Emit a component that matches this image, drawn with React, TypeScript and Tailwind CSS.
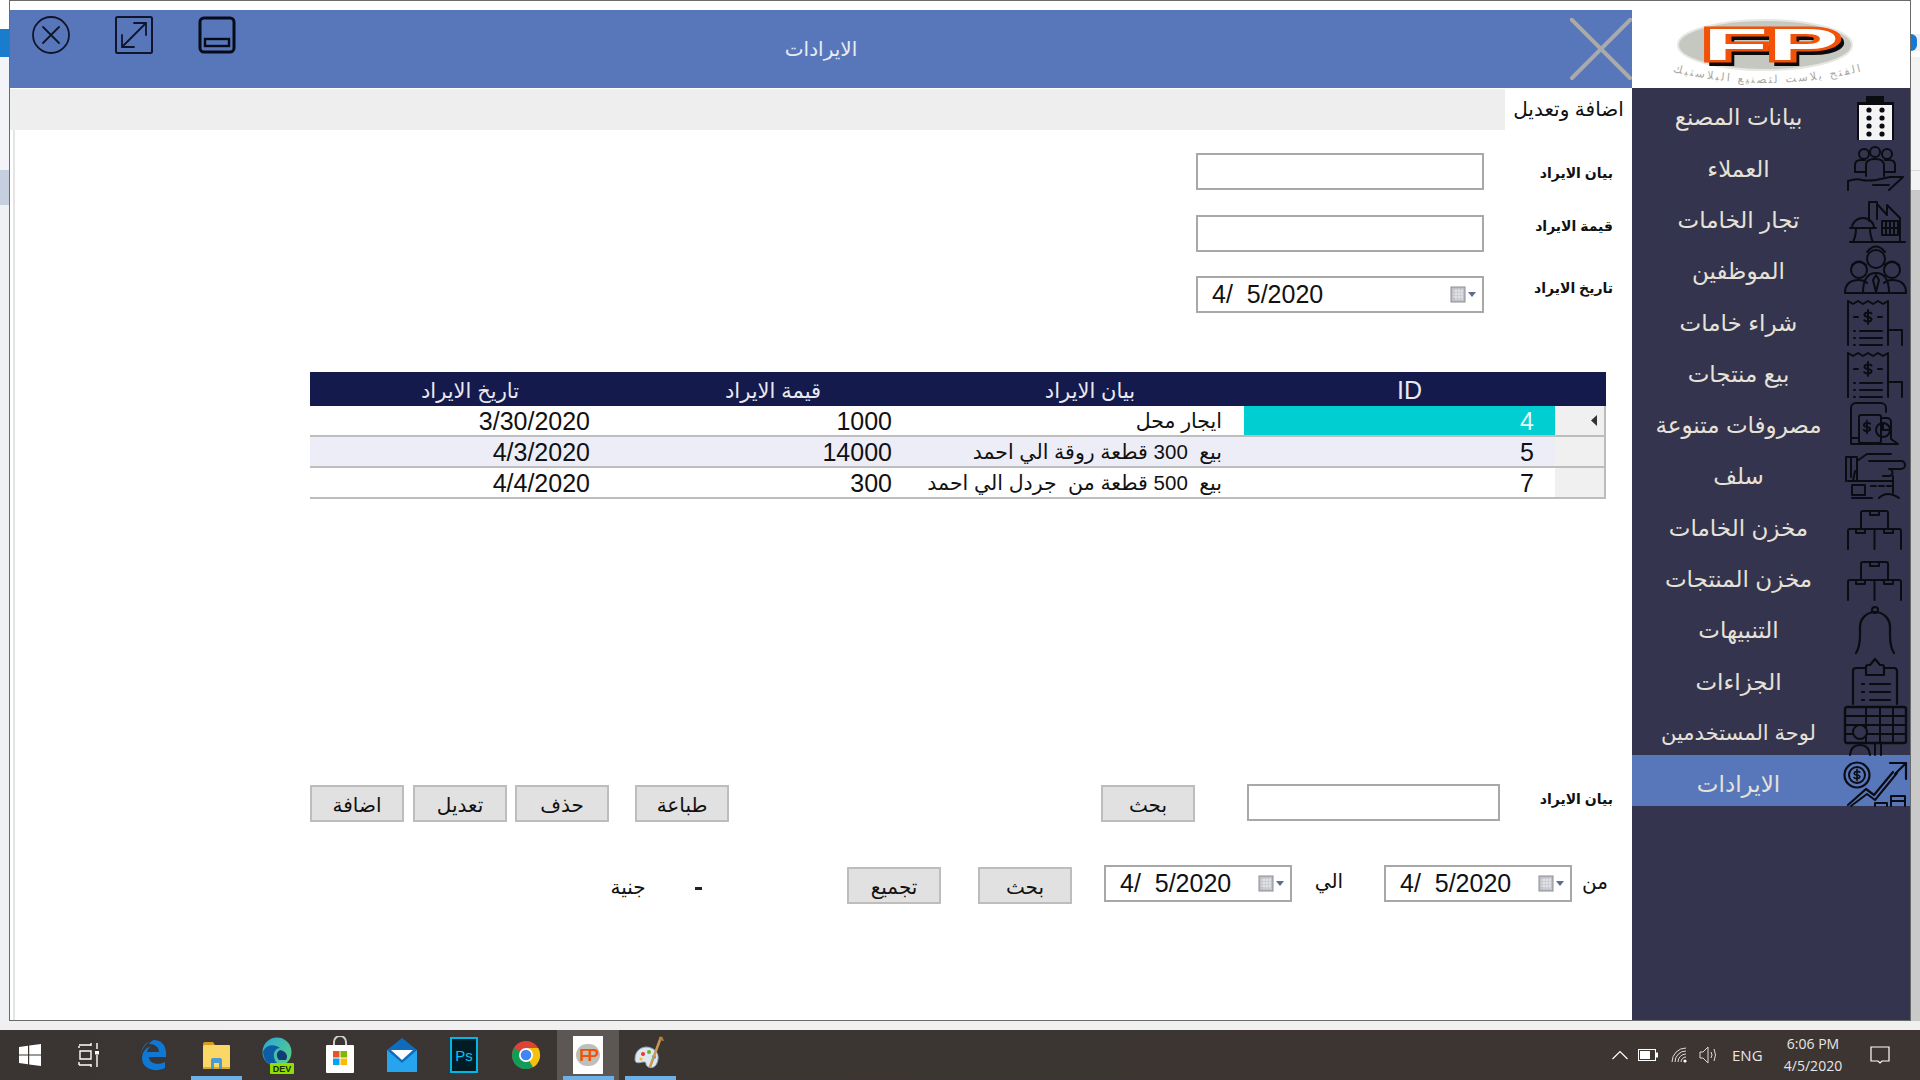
import React from "react";

const AR = "font-['Liberation_Sans','DejaVu_Sans',sans-serif]";

const P = ({ children }: { children: React.ReactNode }) => (
  <svg width="60" height="51" viewBox="0 0 60 51" fill="none" stroke="#0b0b12" strokeWidth="2" strokeLinecap="round" strokeLinejoin="round" className="overflow-visible">
    {children}
  </svg>
);

const Dollar = ({ x, y, s = 1 }: { x: number; y: number; s?: number }) => (
  <g transform={`translate(${x} ${y}) scale(${s})`}>
    <path d="M3.5 -3.5 C2.5 -5 -3.5 -5 -3.5 -2 C-3.5 1 3.5 -1 3.5 2.2 C3.5 5 -2.5 5 -3.8 3.2 M0 -7 V7" />
  </g>
);

const Receipt = () => (
  <P>
    <path d="M3 52 V8 l5 3 5-3 5 3 5-3 5 3 5-3 5 3 5-3 V52" />
    <path d="M43 37 H57 V52" />
    <Dollar x={23} y={24} />
    <path d="M9 24 h4 M33 24 h4 M9 38 h1 M15 38 h22 M9 45 h1 M15 45 h22 M9 52 h1 M15 52 h22" />
  </P>
);

const Boxes = () => (
  <P>
    <path d="M16 30 V14 a2 2 0 0 1 2-2 H41 a2 2 0 0 1 2 2 V30" />
    <path d="M25 12 v4 h9 v-4" />
    <path d="M3 50 V32 a2 2 0 0 1 2-2 H54 a2 2 0 0 1 2 2 V50 M29.5 30 V50" />
    <path d="M11 30 v4 h9 v-4 M39 30 v4 h9 v-4" />
  </P>
);

const icons: React.ReactNode[] = [
  <svg key="0" width="60" height="51" viewBox="0 0 60 51" className="overflow-visible">
    <path d="M21 8 H39 V14 H49 V52 H12 V14 H21 Z" fill="#0b0b12" />
    <rect x="14" y="17" width="33" height="35" fill="#f4f4f4" />
    {[22, 30, 38, 46].map((y) => (
      <g key={y} fill="#0b0b12">
        <circle cx="24" cy={y} r="2.6" />
        <circle cx="37" cy={y} r="2.6" />
      </g>
    ))}
  </svg>,
  <P key="1">
    <circle cx="19" cy="15" r="5" />
    <circle cx="30" cy="13" r="5" />
    <circle cx="42" cy="15" r="5" />
    <path d="M10 33 v-7 q0-5 6-5 h4 M50 33 v-7 q0-5-6-5 h-4" />
    <path d="M21 37 v-11 q0-6 9-6 q9 0 9 6 v11 M10 33 h11 M39 33 h11" />
    <path d="M3 51 v-9 q8-3 14-1 q4 1 14 0 l14-3 l13 0 l-14 13 M28 46 h16" />
  </P>,
  <P key="2">
    <path d="M24 30 V11 h8 V28 M33 14 l9 10 v-10 l13 13 V50" />
    <path d="M5 51 H60" />
    <rect x="37" y="30" width="16" height="14" />
    <path d="M37 37 h16 M45 30 v14 M41 30 v14 M49 30 v14" />
    <path d="M7 37 a11 10 0 0 1 22 0 Z M5 37 h26 M11 37 q0 8 -3 14 M25 37 q0 8 3 14" />
  </P>,
  <P key="3">
    <circle cx="31" cy="17" r="9" />
    <circle cx="14" cy="28" r="8" />
    <circle cx="47" cy="28" r="8" />
    <path d="M22 10 q9 -11 18 0 M7 23 q7 -7 14 0 M40 23 q7 -7 14 0" />
    <path d="M0 51 q0 -13 14 -13 q5 0 8 3 M61 51 q0 -13 -14 -13 q-5 0 -8 3 M18 51 q0 -20 13 -20 q13 0 13 20" />
    <path d="M0 51 H61 M31 33 l-3 5 3 12 3 -12 z" />
  </P>,
  <Receipt key="4" />,
  <Receipt key="5" />,
  <P key="6">
    <path d="M6 47 V12 a5 5 0 0 1 5-5 H36 a5 5 0 0 1 5 5 V16 M6 42 H14" />
    <rect x="14" y="19" width="22" height="28" rx="2" />
    <path d="M36 22 h6 a4 4 0 0 1 4 4 V43 M46 43 l7 5 H6" />
    <Dollar x={22} y={31} s={0.9} />
    <circle cx="38" cy="34" r="7" />
    <path d="M38 27 V34 H45" />
  </P>,
  <P key="7">
    <path d="M1 34 V10 H12 V34 M6 10 V30" />
    <path d="M12 14 L22 7 H46 M24 14 H56 a3 3 0 0 1 0 8 H44 a3 3 0 0 1 0 7 H38" />
    <path d="M3 34 H48 M8 34 L10 24 M48 29 V46" />
    <rect x="7" y="38" width="13" height="10" />
    <path d="M26 39 h5 M34 39 h5 M42 39 h4 M7 51 h20 M34 51 q8-8 20 0" />
  </P>,
  <Boxes key="8" />,
  <Boxes key="9" />,
  <P key="10">
    <circle cx="30" cy="9" r="3" />
    <path d="M11 52 q4 -6 4 -18 V26 a15 15 0 0 1 30 0 V34 q0 12 4 18" strokeWidth="2.2" />
  </P>,
  <P key="11">
    <path d="M8 52 V19 q0-3 3-3 H21 M52 52 V19 q0-3-3-3 H39" strokeWidth="2.2" />
    <path d="M21 23 V15 q0-2 2-2 H25 l5-6 5 6 H37 q2 0 2 2 V23 Z" strokeWidth="2.2" />
    <path d="M17 32 h2 M25 32 h20 M17 40 h2 M25 40 h20 M17 48 h2 M25 48 h20" strokeWidth="2.2" />
  </P>,
  <P key="12">
    <rect x="0" y="3" width="61" height="36" rx="2" strokeWidth="2.4" />
    <path d="M0 12 H61 M0 21 H61 M0 30 H61 M21 3 V39 M35 3 V39 M48 3 V39" strokeWidth="2" />
    <circle cx="15" cy="28" r="7" fill="#34344e" />
    <path d="M5 51 q1-10 10-10 q9 0 10 10 M30 39 V51 M36 39 V51" />
  </P>,
  <P key="13">
    <circle cx="12" cy="20" r="12.5" strokeWidth="2.2" />
    <circle cx="12" cy="20" r="8" />
    <Dollar x={12} y={20} s={0.8} />
    <path d="M3 50 L21 34 L29 40 L48 17" strokeWidth="2.2" />
    <path d="M6 51 L22 39 L30 45 L52 18" strokeWidth="2" />
    <path d="M45 8 H61 V24 M61 8 L50 19" strokeWidth="2.2" />
    <path d="M30 51 V48 H42 V51 M46 51 V41 H60 V51 M46 46 H60" />
  </P>,
];

const menu = [
  "بيانات المصنع",
  "العملاء",
  "تجار الخامات",
  "الموظفين",
  "شراء خامات",
  "بيع منتجات",
  "مصروفات متنوعة",
  "سلف",
  "مخزن الخامات",
  "مخزن المنتجات",
  "التنبيهات",
  "الجزاءات",
  "لوحة المستخدمين",
  "الايرادات",
];

const Logo = () => (
  <svg width="278" height="78" viewBox="0 0 278 78">
    <ellipse cx="133" cy="36" rx="87" ry="25" fill="#c4c8c0" stroke="#e6e6e2" strokeWidth="2" />
    <text x="143" y="55" textAnchor="middle" fontFamily="Liberation Sans" fontWeight="700" fontSize="44" textLength="136" lengthAdjust="spacingAndGlyphs" fill="#0a0a0a" stroke="#0a0a0a" strokeWidth="4">FP</text>
    <text x="139" y="51" textAnchor="middle" fontFamily="Liberation Sans" fontWeight="700" fontSize="44" textLength="136" lengthAdjust="spacingAndGlyphs" fill="#ffffff" stroke="#f25208" strokeWidth="5" paintOrder="stroke">FP</text>
    <path id="arcl" d="M30 60 Q132 88 240 60" fill="none" />
    <text fontFamily="DejaVu Sans" fontSize="11" fill="#a8a8a0" textAnchor="middle" textLength="190">
      <textPath href="#arcl" startOffset="50%">الفتح بلاست لتصنيع البلاستيك</textPath>
    </text>
  </svg>
);

const Calendar = () => (
  <span className="flex items-center gap-[1px]">
    <svg width="17" height="17" viewBox="0 0 17 17">
      <rect x="1" y="1" width="14" height="15" fill="#c0c2c8" stroke="#8a8d94" />
      <path d="M3 5 H13 M3 8 H13 M3 11 H13 M6 3 V14 M9 3 V14 M12 3 V14" stroke="#e6e8ec" strokeWidth="1" />
    </svg>
    <svg width="8" height="5" viewBox="0 0 8 5"><path d="M0 0 H8 L4 5 Z" fill="#5c6c8c" /></svg>
  </span>
);

const DateBox = ({ width, pl, pr }: { width: string; pl: string; pr: string }) => (
  <div className={`${width} ${pl} ${pr} h-[37px] border-2 border-[#a8a8a8] bg-white flex items-center justify-between`}>
    <span className="font-['Liberation_Sans'] text-[25px] whitespace-pre text-[#111]">{"4/  5/2020"}</span>
    <Calendar />
  </div>
);

const Btn = ({ label, className = "" }: { label: string; className?: string }) => (
  <button className={`w-[94px] h-[37px] bg-[#e1e1e1] border-2 border-[#bdbdbd] text-[#111] text-[20px] leading-none pt-[2px] ${AR} ${className}`}>
    {label}
  </button>
);

const TextInput = ({ width }: { width: string }) => <div className={`${width} h-[37px] border-2 border-[#a8a8a8] bg-white`} />;

const Label = ({ text, className = "" }: { text: string; className?: string }) => (
  <span dir="rtl" className={`text-[#111] text-[14px] font-bold whitespace-nowrap ${AR} ${className}`}>
    {text}
  </span>
);

const rows = [
  { id: "4", text: "ايجار محل", val: "1000", date: "3/30/2020", bg: "bg-white" },
  { id: "5", text: "بيع  300 قطعة روقة الي احمد", val: "14000", date: "4/3/2020", bg: "bg-[#ededf8]" },
  { id: "7", text: "بيع  500 قطعة من  جردل الي احمد", val: "300", date: "4/4/2020", bg: "bg-white" },
];

const Win = () => (
  <svg width="22" height="22" viewBox="0 0 22 22" fill="#fff">
    <path d="M0 3 L9 1.8 V10.4 H0 Z M10.2 1.6 L22 0 V10.4 H10.2 Z M0 11.6 H9 V20.2 L0 19 Z M10.2 11.6 H22 V22 L10.2 20.4 Z" />
  </svg>
);

const TaskView = () => (
  <svg width="22" height="26" viewBox="0 0 22 26" fill="none" stroke="#fff" strokeWidth="1.4">
    <path d="M1 3 H13 M13 1 V4 M1 6 V4 M2 9 H13 V17 H2 Z M1 23 H13 M13 25 V22 M1 20 V23 M19 1 V7 M19 13 V25" />
    <rect x="17" y="9" width="4" height="3.5" fill="#fff" stroke="none" />
  </svg>
);

const Edge = () => (
  <svg width="28" height="32" viewBox="0 0 28 32">
    <path d="M14 1 C22 1 27 7 26 18 H9 C9 24 17 27 25 23 V29 C15 34 2 30 2 19 C2 14 5 9 11 7 C8 9 7 12 7 13 H19 C19 8 15 5 9 5 C11 2 13 1 14 1 Z M1 15 C2 9 5 4 9 3 C5 6 2 10 1 15Z" fill="#0f78d4" />
  </svg>
);

const Folder = () => (
  <svg width="28" height="30" viewBox="0 0 28 30">
    <path d="M1 4 a2 2 0 0 1 2-2 H11 L13 5 H1 Z" fill="#d59c1f" />
    <rect x="1" y="5" width="27" height="24" rx="1" fill="#fbd765" />
    <rect x="1" y="27" width="27" height="2" fill="#d9a92c" />
    <path d="M9 29 V20 a2 2 0 0 1 2-2 H18 a2 2 0 0 1 2 2 V29 H17 V23 H12 V29 Z" fill="#4a9ad4" />
  </svg>
);

const EdgeDev = () => (
  <svg width="32" height="38" viewBox="0 0 32 38">
    <defs>
      <linearGradient id="edg" x1="0" y1="0" x2="1" y2="1">
        <stop offset="0" stopColor="#2aa8d8" />
        <stop offset="1" stopColor="#5ed47a" />
      </linearGradient>
    </defs>
    <circle cx="15" cy="16" r="14.5" fill="url(#edg)" />
    <path d="M1 16 C3 9 12 7 18 12 C15 12 11 15 12 21 C13 27 18 30 24 29 C15 34 2 30 1 16 Z" fill="#0c5da5" />
    <path d="M18 14 C23 15 27 19 24 24 H17 C14 21 14 16 18 14 Z" fill="#123c78" />
    <rect x="8" y="27" width="24" height="11" rx="1" fill="#8fe000" />
    <text x="20" y="36" textAnchor="middle" fontFamily="Liberation Sans" fontSize="9" fontWeight="700" fill="#1a2a00">DEV</text>
  </svg>
);

const Store = () => (
  <svg width="30" height="38" viewBox="0 0 30 38">
    <path d="M9 10 V6 a6 6 0 0 1 12 0 V10" fill="none" stroke="#cfcfcf" strokeWidth="2" />
    <rect x="1" y="9" width="28" height="28" rx="1" fill="#fff" />
    <rect x="8" y="15" width="6.5" height="6.5" fill="#e8532a" />
    <rect x="15.5" y="15" width="6.5" height="6.5" fill="#7fba00" />
    <rect x="8" y="22.5" width="6.5" height="6.5" fill="#00a4ef" />
    <rect x="15.5" y="22.5" width="6.5" height="6.5" fill="#ffb900" />
  </svg>
);

const Mail = () => (
  <svg width="30" height="34" viewBox="0 0 30 34">
    <path d="M15 0 L30 12 V34 H0 V12 Z" fill="#0f6cbd" />
    <path d="M4 12 H26 L15 22 Z" fill="#fff" />
    <path d="M0 12 L15 25 L30 12 V34 H0 Z" fill="#27a4ee" />
  </svg>
);

const Ps = () => (
  <div className="w-[28px] h-[36px] bg-[#001d26] border-2 border-[#00b8e6] flex items-center justify-center text-[#00c8ff] font-['Liberation_Sans'] text-[15px] leading-none">
    Ps
  </div>
);

const Chrome = () => (
  <svg width="30" height="38" viewBox="-1 -5 30 38">
    <circle cx="14" cy="14" r="14" fill="#db4437" />
    <path d="M14 14 L26 21 A14 14 0 0 1 7 26.2 Z" fill="#0f9d58" />
    <path d="M14 14 L7 26.2 A14 14 0 0 1 2 7 Z" fill="#0f9d58" />
    <path d="M14 7 H26.2 A14 14 0 0 1 21 26.2 L14 14 Z" fill="#f4c20d" />
    <circle cx="14" cy="14" r="7" fill="#fff" />
    <circle cx="14" cy="14" r="5.3" fill="#4285f4" />
  </svg>
);

const FpTask = () => (
  <div className="w-[30px] h-[38px] bg-white flex items-center justify-center">
    <div className="w-[24px] h-[22px] rounded-full bg-[#bfbfba] flex items-center justify-center text-[#f25208] text-[17px] font-bold font-['Liberation_Sans'] tracking-[-2px] leading-none">
      FP
    </div>
  </div>
);

const Paint = () => (
  <svg width="32" height="40" viewBox="0 0 32 40">
    <path d="M1 24 C1 14 10 10 17 13 C23 15 26 21 23 28 C21 33 16 34 13 31 C11 29 13 27 10 27 C6 27 1 30 1 24 Z" fill="#dfe7ee" stroke="#8ea6b8" />
    <circle cx="9" cy="19" r="2" fill="#e33" />
    <circle cx="15" cy="17" r="2" fill="#5b3" />
    <circle cx="20" cy="22" r="2" fill="#39d" />
    <circle cx="7" cy="24" r="1.6" fill="#fb2" />
    <path d="M27 2 L16 32" stroke="#c89850" strokeWidth="2.5" />
    <path d="M25 5 L30 6 L28 1 Z" fill="#b07a3a" />
  </svg>
);

const tasks: { node: React.ReactNode; active?: boolean; run?: boolean }[] = [
  { node: <Edge /> },
  { node: <Folder />, run: true },
  { node: <EdgeDev /> },
  { node: <Store /> },
  { node: <Mail /> },
  { node: <Ps /> },
  { node: <Chrome /> },
  { node: <FpTask />, active: true, run: true },
  { node: <Paint />, run: true },
];

export default function App() {
  return (
    <div className="w-[1920px] h-[1080px] overflow-hidden flex flex-col bg-[#f0f0f0]">
      <div className="h-[1021px] flex">
        {/* page behind, left */}
        <div className="w-[9px] flex flex-col">
          <div className="h-[29px] bg-white" />
          <div className="h-[28px] bg-[#1a7ccc]" />
          <div className="h-[113px] bg-[#f3f4f7]" />
          <div className="h-[35px] bg-[#c5cfe0]" />
          <div className="flex-1 bg-[#f0f1f4]" />
        </div>

        {/* window */}
        <div className="w-[1902px] flex flex-col border border-[#6a6a6a] bg-white">
          <div className="h-[9px] bg-white" />
          <div className="flex-1 flex min-h-0">
            {/* main */}
            <div className="w-[1622px] flex flex-col">
              <div className="h-[78px] bg-[#5877bb] relative flex items-center justify-center shrink-0">
                <div className="absolute left-[22px] top-[6px] flex gap-[38px]">
                  <svg width="38" height="38" viewBox="0 0 38 38" fill="none" stroke="#10152b" strokeWidth="1.8" strokeLinecap="round">
                    <circle cx="19" cy="19" r="18" />
                    <path d="M11 11 L27 27 M27 11 L11 27" />
                  </svg>
                  <svg className="ml-[7px]" width="38" height="38" viewBox="0 0 38 38" fill="none" stroke="#10152b" strokeWidth="1.8" strokeLinecap="round">
                    <rect x="1" y="1" width="36" height="36" rx="1.5" strokeWidth="2" />
                    <path d="M7 31 L31 7 M19 7 H31 V19 M7 19 V31 H19" />
                  </svg>
                  <svg className="ml-[7px]" width="38" height="38" viewBox="0 0 38 38" fill="none" stroke="#070a18" strokeWidth="3">
                    <rect x="2" y="2" width="34" height="34" rx="4" />
                    <rect x="7" y="23" width="24" height="7" strokeWidth="2.4" />
                  </svg>
                </div>
                <span dir="rtl" className={`text-[#e8ebf3] text-[20px] ${AR}`}>الايرادات</span>
                <svg className="absolute right-0 top-[8px]" width="62" height="62" viewBox="0 0 62 62" stroke="#aaaaaa" strokeWidth="4" strokeLinecap="round">
                  <path d="M1 1 L60 60 M61 1 L2 60" />
                </svg>
              </div>

              <div className="h-[41px] mt-[1px] bg-[#eeeeee] flex justify-end shrink-0">
                <div dir="rtl" className={`w-[127px] h-[41px] bg-white text-[#111] text-[20px] flex items-center justify-center pb-[2px] ${AR}`}>اضافة وتعديل</div>
              </div>

              <div className="flex-1 ml-[3px] border-l-2 border-[#e4e4e4] flex flex-col">
                {/* form */}
                <div className="flex justify-end items-center pr-[19px] mt-[23px]">
                  <TextInput width="w-[288px]" />
                  <Label text="بيان الايراد" className="w-[129px] mt-[4px]" />
                </div>
                <div className="flex justify-end items-center pr-[19px] mt-[25px]">
                  <TextInput width="w-[288px]" />
                  <Label text="قيمة الايراد" className="w-[129px] mb-[14px]" />
                </div>
                <div className="flex justify-end items-center pr-[19px] mt-[24px]">
                  <DateBox width="w-[288px]" pl="pl-[14px]" pr="pr-[6px]" />
                  <Label text="تاريخ الايراد" className="w-[129px] mb-[12px]" />
                </div>

                {/* table */}
                <div className="ml-[295px] w-[1296px] mt-[59px]">
                  <div className={`h-[34px] bg-[#141a4b] text-[#e9e9f2] text-[21px] grid grid-cols-[320px_286px_348px_291px_51px] items-center text-center ${AR}`}>
                    <span dir="rtl">تاريخ الايراد</span>
                    <span dir="rtl">قيمة الايراد</span>
                    <span dir="rtl">بيان الايراد</span>
                    <span className="font-['Liberation_Sans'] text-[25px]">ID</span>
                    <span />
                  </div>
                  {rows.map((r, i) => (
                    <div key={r.id} className={`h-[31px] ${r.bg} border-b-2 border-[#bdbdbd] grid grid-cols-[280px_302px_352px_311px_51px] items-center text-[#111] font-['Liberation_Sans'] text-[25px] leading-none`}>
                      <span className="text-right pt-[2px]">{r.date}</span>
                      <span className="text-right pt-[2px]">{r.val}</span>
                      <span dir="rtl" className={`text-right pr-[22px] pt-[2px] text-[20.5px] whitespace-pre overflow-visible ${AR}`}>
                        {r.text}
                      </span>
                      <span className={`h-full flex items-center justify-end pr-[21px] pt-[2px] ${i === 0 ? "bg-[#00ced1] text-[#e4f8f8]" : ""}`}>{r.id}</span>
                      <span className="h-full bg-[#f0f0f0] border-r-2 border-[#bdbdbd] flex items-center justify-end pr-[7px]">
                        {i === 0 && (
                          <svg width="6" height="11" viewBox="0 0 6 11"><path d="M6 0 V11 L0 5.5 Z" fill="#333" /></svg>
                        )}
                      </span>
                    </div>
                  ))}
                </div>

                {/* search row */}
                <div className="flex items-start mt-[285px] pl-[295px]">
                  <Btn label="اضافة" className="mt-[1px]" />
                  <Btn label="تعديل" className="mt-[1px] ml-[9px]" />
                  <Btn label="حذف" className="mt-[1px] ml-[8px]" />
                  <Btn label="طباعة" className="mt-[1px] ml-[26px]" />
                  <Btn label="بحث" className="mt-[1px] ml-[372px]" />
                  <TextInput width="w-[253px] ml-[52px]" />
                  <Label text="بيان الايراد" className="w-[113px] mt-[5px]" />
                </div>

                {/* date row */}
                <div className="flex items-start mt-[43px] pl-[593px]">
                  <span dir="rtl" className={`w-[40px] mt-[7px] text-center text-[#111] text-[20px] ${AR}`}>جنية</span>
                  <span className="w-[7px] ml-[47px] mt-[22px] h-[3px] bg-[#222]" />
                  <Btn label="تجميع" className="mt-[2px] ml-[145px]" />
                  <Btn label="بحث" className="mt-[2px] ml-[37px]" />
                  <DateBox width="w-[188px] ml-[32px]" pl="pl-[14px]" pr="pr-[6px]" />
                  <span dir="rtl" className={`w-[92px] pr-[18px] mt-[1px] text-center text-[#111] text-[20px] ${AR}`}>الي</span>
                  <DateBox width="w-[188px]" pl="pl-[14px]" pr="pr-[6px]" />
                  <span dir="rtl" className={`w-[41px] pr-[5px] mt-[2px] text-[#111] text-[20px] text-right ${AR}`}>
                    من
                  </span>
                </div>
              </div>
            </div>

            {/* sidebar */}
            <div className="w-[278px] flex flex-col">
              <div className="h-[78px] bg-white shrink-0 -mt-[1px]">
                <Logo />
              </div>
              <div className="flex-1 bg-[#34344e] mt-[1px]">
                {menu.map((m, i) => (
                  <div key={m} className={`h-[51.3px] flex items-center ${i === 13 ? "bg-[#5877bb]" : ""}`}>
                    <div dir="rtl" className={`w-[213px] pt-[8px] text-center text-[#e6e2d8] whitespace-nowrap ${i === 12 ? "text-[21px]" : "text-[23px]"} ${AR}`}>{m}</div>
                    <div className="w-[60px] h-[51px]">{icons[i]}</div>
                  </div>
                ))}
              </div>
            </div>
          </div>
        </div>

        {/* page behind, right */}
        <div className="w-[9px] flex flex-col">
          <div className="h-[34px] bg-white" />
          <div className="h-[17px] w-[6px] rounded-r-full bg-[#1678d2]" />
          <div className="h-[6px] bg-white" />
          <div className="h-[113px] bg-[#f3f3f3]" />
          <div className="h-[20px] bg-[#f3f3f3] border-t border-[#d8d8d8]" />
          <div className="flex-1 bg-[#c9c9c9]" />
        </div>
      </div>

      <div className="h-[9px] bg-[#f0f0f0]" />

      {/* taskbar */}
      <div className="h-[50px] bg-gradient-to-r from-[#3a3533] to-[#3d3532] flex items-stretch text-white">
        <div className="w-[60px] flex items-center justify-center"><Win /></div>
        <div className="w-[58px] flex items-center justify-center"><TaskView /></div>
        <div className="w-[5px]" />
        {tasks.map((t, i) => (
          <div key={i} className={`w-[62px] flex items-center justify-center relative ${t.active ? "bg-[#5c5654]" : ""}`}>
            {t.node}
            {t.run && <span className="absolute left-[6px] right-[5px] bottom-0 h-[4px] bg-[#6cb0e6]" />}
          </div>
        ))}
        <div className="flex-1" />
        <div className="flex items-center font-['Open_Sans'] text-[14px] text-[#e8e6e4]">
          <svg className="mr-[10px]" width="16" height="10" viewBox="0 0 16 10" fill="none" stroke="#fff" strokeWidth="1.2"><path d="M0.5 9 L8 1.5 L15.5 9" /></svg>
          <svg className="mr-[13px]" width="20" height="12" viewBox="0 0 20 12" fill="none" stroke="#fff"><rect x="0.5" y="0.5" width="17" height="11" /><rect x="2" y="2" width="10" height="8" fill="#fff" stroke="none" /><rect x="18" y="3.5" width="2" height="5" fill="#fff" stroke="none" /></svg>
          <svg className="mr-[12px]" width="16" height="16" viewBox="0 0 16 16" fill="none" stroke="#ddd" strokeWidth="1"><path d="M1 15 A14 14 0 0 1 15 1 M4 15 A11 11 0 0 1 15 4 M7 15 A8 8 0 0 1 15 7 M10 15 A5 5 0 0 1 15 10" /><circle cx="14" cy="14" r="1.6" fill="#fff" stroke="none" /></svg>
          <svg className="mr-[13px]" width="20" height="18" viewBox="0 0 20 18" fill="none" stroke="#ddd"><path d="M1 6 H4 L9 1 V17 L4 12 H1 Z" /><path d="M12 6 Q14 9 12 12 M15 3 Q18 9 15 15" /></svg>
          <span className="w-[30px] text-center mr-[16px] text-[15px]">ENG</span>
          <div className="w-[70px] flex flex-col items-center leading-[22px] mr-[22px]">
            <span>6:06 PM</span>
            <span>4/5/2020</span>
          </div>
          <svg className="mr-[30px]" width="20" height="20" viewBox="0 0 20 20" fill="none" stroke="#fff" strokeWidth="1.2"><path d="M1 2 H19 V16 H12 L10 18 L8 16 H1 Z" /></svg>
        </div>
      </div>
    </div>
  );
}
